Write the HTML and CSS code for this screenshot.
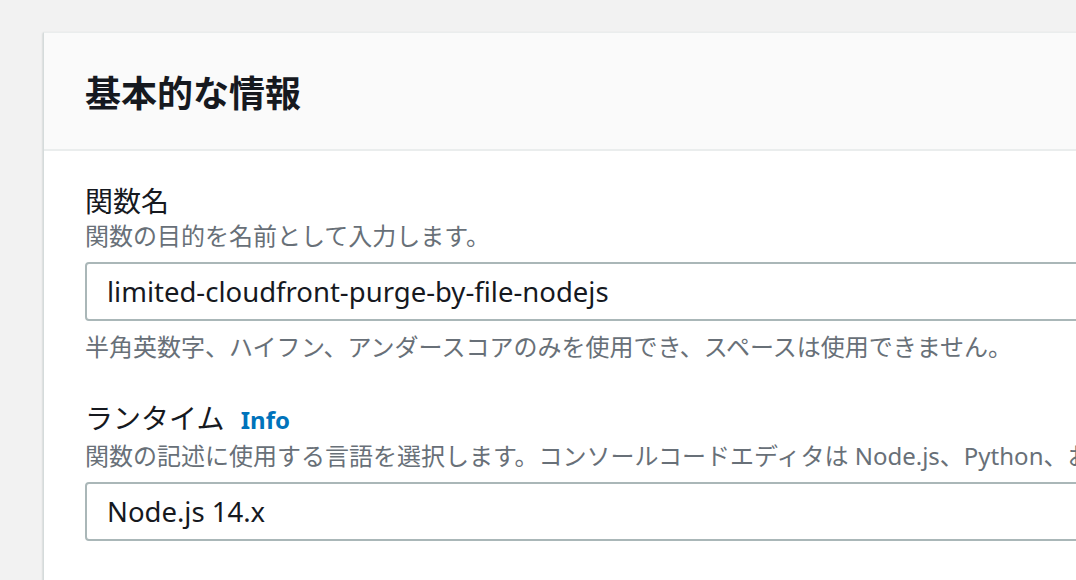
FILE: index.html
```html
<!DOCTYPE html>
<html lang="ja">
<head>
    <meta charset="UTF-8">
    <meta name="viewport" content="width=device-width, initial-scale=1.0">
    <title>基本的な情報</title>
    <link rel="stylesheet" href="styles.css">
</head>
<body>
    <div class="panel">
        <div class="panel-header">
            <h2>基本的な情報</h2>
        </div>
        <div class="panel-body">
            <div class="field">
                <label class="field-label" for="functionName">関数名</label>
                <div class="field-desc">関数の目的を名前として入力します。</div>
                <input type="text" id="functionName" class="text-input" value="limited-cloudfront-purge-by-file-nodejs">
                <div class="field-hint">半角英数字、ハイフン、アンダースコアのみを使用でき、スペースは使用できません。</div>
            </div>
            <div class="field">
                <div class="field-label">ランタイム <a class="info-link" href="#">Info</a></div>
                <div class="field-desc">関数の記述に使用する言語を選択します。コンソールコードエディタは Node.js、Python、および Ruby のみをサポートしています。</div>
                <div class="select-box">Node.js 14.x</div>
            </div>
        </div>
    </div>
</body>
</html>
```

FILE: styles.css
```css
body {
    font-family: "Noto Sans", "Noto Sans CJK JP", sans-serif;
    margin: 0;
    padding: 32px 0 0 43px;
    background-color: #f2f2f2;
    overflow: hidden;
    color: #16191f;
}
.panel {
    width: 1200px;
    background: white;
    border-left: 1px solid #d5dbdb;
    border-top: 1px solid #eaeded;
    box-shadow: 0 1px 2px rgba(0, 28, 36, 0.25);
}
.panel-header {
    background-color: #fafafa;
    border-bottom: 2px solid #eaeded;
    padding: 36px 41px;
    height: 44px;
}
.panel-header h2 {
    margin: 0;
    font-size: 36px;
    line-height: 44px;
    font-weight: bold;
    font-family: "Noto Sans CJK JP", sans-serif;
}
.panel-body {
    padding: 31px 41px;
}
.field {
    margin-bottom: 36px;
}
.field-label {
    display: block;
    font-size: 28px;
    line-height: 36px;
    margin-bottom: 2px;
    font-family: "Noto Sans CJK JP", sans-serif;
}
.info-link {
    font-family: "Noto Sans", sans-serif;
    font-size: 24px;
    font-weight: bold;
    color: #0073bb;
    text-decoration: none;
    margin-left: 10px;
}
.field-desc,
.field-hint {
    font-size: 24px;
    line-height: 32px;
    color: #687078;
    white-space: nowrap;
}
.field-desc {
    margin-bottom: 10px;
}
.field-hint {
    margin-top: 10px;
}
.text-input,
.select-box {
    display: block;
    box-sizing: border-box;
    width: 1120px;
    height: 59px;
    padding: 0 20px;
    border: 2px solid #aab7b8;
    border-radius: 4px;
    font-family: "Noto Sans", sans-serif;
    font-size: 27.5px;
    line-height: 55px;
    color: #16191f;
    background: white;
}
```
